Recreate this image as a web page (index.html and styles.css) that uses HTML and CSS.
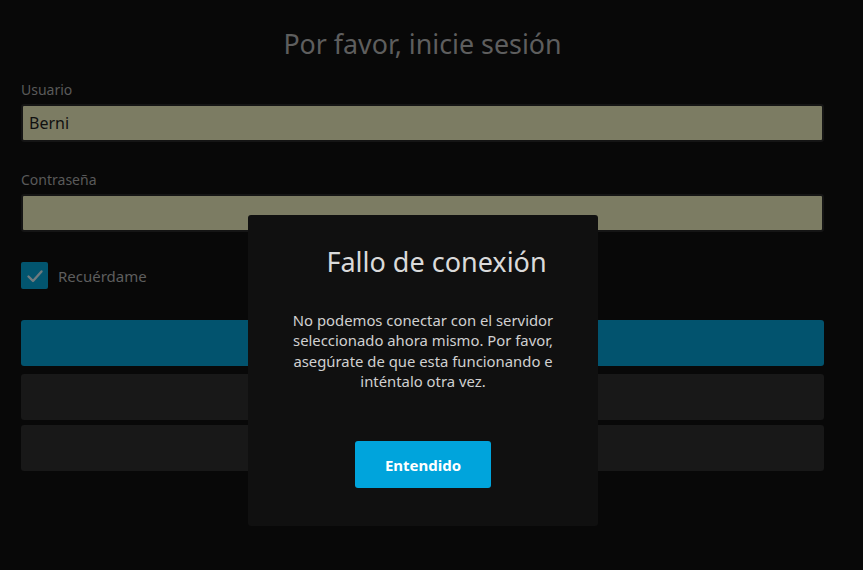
FILE: index.html
```html
<!DOCTYPE html>
<html lang="es">
<head>
    <meta charset="UTF-8">
    <meta name="viewport" content="width=device-width, initial-scale=1.0">
    <title>Iniciar sesión</title>
    <link rel="stylesheet" href="styles.css">
</head>
<body>

    <div class="login-page">
        <h1 class="login-title">Por favor, inicie sesión</h1>

        <form class="login-form">
            <div class="field">
                <label for="user">Usuario</label>
                <input type="text" id="user" value="Berni">
            </div>

            <div class="field">
                <label for="pass">Contraseña</label>
                <input type="password" id="pass">
            </div>

            <label class="remember">
                <span class="check-box">
                    <svg width="20" height="20" viewBox="0 0 20 20">
                        <path d="M3.5 10.5 L8 15 L16.5 5.5" fill="none" stroke="#6f7b7f" stroke-width="2.4" stroke-linecap="round" stroke-linejoin="round"/>
                    </svg>
                </span>
                Recuérdame
            </label>

            <div class="buttons">
                <div class="btn btn-primary"></div>
                <div class="btn btn-dark"></div>
                <div class="btn btn-dark"></div>
            </div>
        </form>
    </div>

    <div class="dialog">
        <h2 class="dialog-title">Fallo de conexión</h2>
        <p class="dialog-text">No podemos conectar con el servidor seleccionado ahora mismo. Por favor, asegúrate de que esta funcionando e inténtalo otra vez.</p>
        <button class="dialog-btn">Entendido</button>
    </div>

</body>
</html>
```

FILE: styles.css
```css
body {
    font-family: 'Noto Sans', sans-serif;
    background-color: #080808;
    margin: 0;
    height: 570px;
    overflow: hidden;
}
.login-page {
    margin: 0 39px 0 21px;
}
.login-title {
    font-size: 26.8px;
    font-weight: normal;
    color: #5e5e5e;
    text-align: center;
    margin: 0;
    padding-top: 25px;
    line-height: 38px;
}
.login-form {
    margin-top: 17px;
}
.field {
    margin-bottom: 28px;
}
.field label {
    display: block;
    font-size: 14px;
    color: #5a5a5a;
    line-height: 20px;
    margin-bottom: 4px;
}
.field input {
    display: block;
    box-sizing: border-box;
    width: 100%;
    height: 38px;
    background-color: #7c7c63;
    border: 2px solid #151515;
    border-radius: 3px;
    padding: 0 6px;
    font-family: 'Noto Sans', sans-serif;
    font-size: 16px;
    color: #101010;
    outline: none;
}
.remember {
    display: flex;
    align-items: center;
    gap: 10px;
    font-size: 15px;
    color: #5e5e5e;
    margin-top: 30px;
}
.check-box {
    width: 27px;
    height: 27px;
    background-color: #02556f;
    border-radius: 2px;
    display: flex;
    align-items: center;
    justify-content: center;
}
.buttons {
    margin-top: 31px;
    display: flex;
    flex-direction: column;
    gap: 7px;
}
.btn {
    height: 46px;
    border-radius: 3px;
}
.btn-primary {
    background-color: #02536e;
    margin-bottom: 1px;
}
.btn-dark {
    background-color: #181818;
}
.btn-dark + .btn-dark {
    margin-top: -2px;
}
.dialog {
    position: absolute;
    left: 248px;
    top: 215px;
    width: 350px;
    height: 311px;
    box-sizing: border-box;
    background-color: #101010;
    border-radius: 3px;
    text-align: center;
    padding: 0 28px;
}
.dialog-title {
    font-size: 27px;
    font-weight: normal;
    color: #dadada;
    margin: 29px 0 0;
    padding-left: 27px;
    line-height: 36px;
}
.dialog-text {
    font-size: 14.85px;
    color: #d0d0d0;
    line-height: 20.3px;
    margin: 30px 0 0;
}
.dialog-btn {
    margin-top: 50px;
    width: 136px;
    height: 47px;
    background-color: #00a4dc;
    border: none;
    border-radius: 3px;
    color: #fff;
    font-family: 'Noto Sans', sans-serif;
    font-size: 15px;
    font-weight: bold;
}
```
